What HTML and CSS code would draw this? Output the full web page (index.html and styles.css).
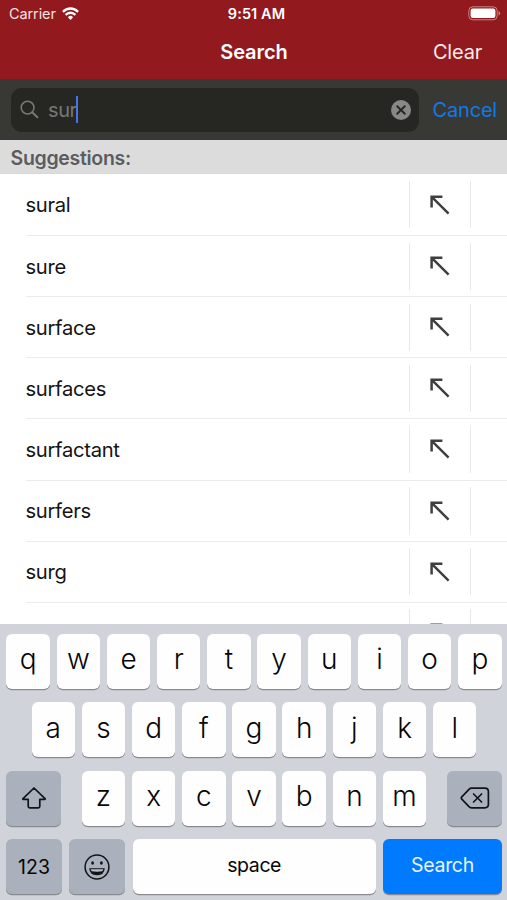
FILE: index.html
```html
<!DOCTYPE html>
<html lang="en">
<head>
<meta charset="utf-8">
<title>Search</title>
<link rel="stylesheet" href="styles.css">
</head>
<body>
<svg class="defs" aria-hidden="true">
  <symbol id="insert" viewBox="0 0 20 20"><path d="M1.6 12.4V1.8H12.4M2 2.2 18.6 18.6" fill="none" stroke="#3f3f3f" stroke-width="2.5"/></symbol>
</svg>
<div class="phone">
  <header class="top">
    <div class="status">
      <div class="carrier"><span>Carrier</span>
        <svg width="17" height="13" viewBox="0 0 17 12" preserveAspectRatio="none" fill="none" stroke="#fff" stroke-width="2.2"><path d="M.9 4.5a10.8 10.8 0 0 1 15.2 0M3.6 7.3a7 7 0 0 1 9.8 0"/><path d="M5.9 9.4a3.7 3.7 0 0 1 5.2 0L8.5 12z" fill="#fff" stroke="none"/></svg>
      </div>
      <div class="time">9:51 AM</div>
      <svg class="battery" width="33" height="15" viewBox="0 0 33 15"><rect x=".8" y=".8" width="28.4" height="13" rx="4" fill="none" stroke="#c98485" stroke-width="1"/><rect x="2.6" y="2.6" width="24.8" height="9.4" rx="2.2" fill="#fff"/><path d="M30.6 5v4.6q1.5-.7 1.5-2.3T30.6 5" fill="#c98485"/></svg>
    </div>
    <nav class="nav"><h1>Search</h1><span class="clear">Clear</span></nav>
  </header>
  <div class="searchbar">
    <div class="field">
      <svg class="lens" width="20" height="20" viewBox="0 0 20 20" fill="none" stroke="#777873"><circle cx="7.6" cy="7.6" r="6.4" stroke-width="1.6"/><path d="m12.4 12.4 5 4.8" stroke-width="2.1" stroke-linecap="round"/></svg>
      <span class="query">sur</span><i class="caret"></i>
      <svg class="wipe" width="20" height="20" viewBox="0 0 20 20"><circle cx="10" cy="10" r="10" fill="#888986"/><path d="m6.2 6.2 7.6 7.6m0-7.6-7.6 7.6" stroke="#292a25" stroke-width="2" stroke-linecap="round"/></svg>
    </div>
    <span class="cancel">Cancel</span>
  </div>
  <h2 class="section">Suggestions:</h2>
  <main class="list">
    <div class="row"><span>sural</span><b><svg><use href="#insert"/></svg></b></div>
    <div class="row"><span>sure</span><b><svg><use href="#insert"/></svg></b></div>
    <div class="row"><span>surface</span><b><svg><use href="#insert"/></svg></b></div>
    <div class="row"><span>surfaces</span><b><svg><use href="#insert"/></svg></b></div>
    <div class="row"><span>surfactant</span><b><svg><use href="#insert"/></svg></b></div>
    <div class="row"><span>surfers</span><b><svg><use href="#insert"/></svg></b></div>
    <div class="row"><span>surg</span><b><svg><use href="#insert"/></svg></b></div>
    <div class="row"><span></span><b><svg><use href="#insert"/></svg></b></div>
  </main>
  <div class="keyboard">
    <div class="keys"><kbd>q</kbd><kbd>w</kbd><kbd>e</kbd><kbd>r</kbd><kbd>t</kbd><kbd>y</kbd><kbd>u</kbd><kbd>i</kbd><kbd>o</kbd><kbd>p</kbd></div>
    <div class="keys"><kbd>a</kbd><kbd>s</kbd><kbd>d</kbd><kbd>f</kbd><kbd>g</kbd><kbd>h</kbd><kbd>j</kbd><kbd>k</kbd><kbd>l</kbd></div>
    <div class="keys spread">
      <kbd class="side"><svg width="26" height="24" viewBox="0 0 26 24"><path d="M13 2 2 12.6q-.5.7.3.7h4.9v7q0 1.5 1.5 1.5h8.6q1.5 0 1.5-1.5v-7h4.9q.8 0 .3-.7z" fill="none" stroke="#111317" stroke-width="1.7" stroke-linejoin="round"/></svg></kbd>
      <div class="keys"><kbd>z</kbd><kbd>x</kbd><kbd>c</kbd><kbd>v</kbd><kbd>b</kbd><kbd>n</kbd><kbd>m</kbd></div>
      <kbd class="side"><svg width="30" height="22" viewBox="0 0 30 22" fill="none" stroke="#111317" stroke-width="1.7" stroke-linejoin="round" stroke-linecap="round"><path d="M11.5 1.2h13.3q3.6 0 3.6 3.5v12.6q0 3.5-3.6 3.5H11.5q-1.4 0-2.5-1.1L1.8 12.2q-1-1.2 0-2.4L9 2.3q1.1-1.1 2.5-1.1z"/><path d="m13.6 7 8 8m0-8-8 8"/></svg></kbd>
    </div>
    <div class="keys bottom">
      <kbd class="mod">123</kbd>
      <kbd class="mod"><svg width="26" height="26" viewBox="0 0 26 26"><circle cx="13" cy="13" r="11.9" fill="none" stroke="#111317" stroke-width="1.5"/><ellipse cx="8.6" cy="9" rx="1.4" ry="1.7" fill="#111317"/><ellipse cx="17.4" cy="9" rx="1.4" ry="1.7" fill="#111317"/><path d="M5.2 14.2h15.6q-.6 7-7.8 7t-7.8-7z" fill="#111317"/><path d="M6.7 15.3h12.6q-.3 1.6-1.2 1.9-5.1.9-10.2 0-.9-.3-1.2-1.9z" fill="#b9c0ca"/></svg></kbd>
      <kbd class="space">space</kbd>
      <kbd class="go">Search</kbd>
    </div>
  </div>
</div>
</body>
</html>
```

FILE: styles.css
```css
* { box-sizing: border-box; margin: 0; padding: 0; }
body { font-family: Inter, "Liberation Sans", sans-serif; font-size: 20px; color: #141414; background: #fff; }
svg { display: block; flex: none; }
.defs { display: none; }
.phone { width: 507px; height: 900px; overflow: hidden; display: flex; flex-direction: column; }
.top { height: 79px; flex: none; background: #92191e; color: #fff; }
.status { height: 27px; padding: 0 6px 0 9px; display: grid; grid-template-columns: 1fr auto 1fr; align-items: center; font-size: 14.5px; }
.carrier { display: flex; align-items: center; gap: 6px; color: #f5e2e2; letter-spacing: -0.1px; }
.time { font-weight: 600; letter-spacing: 0.1px; padding-left: 3px; }
.battery { justify-self: end; }
.nav { height: 50px; padding: 0 25px 0 0; display: grid; grid-template-columns: 1fr auto 1fr; align-items: center; }
.nav h1 { grid-column: 2; font-size: 20px; font-weight: 600; letter-spacing: -0.05px; padding-left: 26px; }
.clear { justify-self: end; font-size: 20px; letter-spacing: -0.2px; color: #fbebeb; }
.searchbar { height: 61px; flex: none; background: #383934; display: flex; align-items: center; padding: 0 10px 0 11px; justify-content: space-between; }
.field { width: 408px; height: 44px; border-radius: 11px; background: #262722; display: flex; align-items: center; padding: 0 9px; }
.lens { margin-right: 8px; }
.query { color: #777873; font-size: 20px; letter-spacing: -0.4px; }
.caret { width: 2.5px; height: 27px; background: #4672ee; margin-left: -1px; }
.wipe { margin-left: auto; margin-right: -1px; }
.cancel { color: #117ae5; font-size: 20px; letter-spacing: -0.2px; }
.section { height: 34px; flex: none; background: #dcdcdc; color: #5c5c5f; font-size: 19.5px; font-weight: 600; letter-spacing: -0.3px; line-height: 36px; padding-left: 10.5px; border-bottom: 1px solid #d8d8d8; }
.list { height: 450px; flex: none; overflow: hidden; padding-top: 0.8px; }
.row { height: 61.15px; margin-left: 25.5px; border-bottom: 1px solid #ebebeb; display: flex; align-items: center; justify-content: space-between; font-size: 20.2px; letter-spacing: -0.3px; }
.row b { width: 62px; height: 47px; margin-right: 36px; border: solid #e9e9e9; border-width: 0 1px; display: flex; align-items: center; justify-content: center; }
.row b svg { width: 20px; height: 20px; margin-right: 1px; }
.keyboard { flex: 1; background: #d0d3d9; padding: 9.5px 5px 0 6px; display: flex; flex-direction: column; gap: 13.5px; }
.keys { display: flex; gap: 6.75px; justify-content: center; }
.spread { justify-content: space-between; }
kbd { width: 43.45px; height: 55px; border-radius: 6px; background: #fefefe; box-shadow: 0 1.3px 0 #898b90; font: 350 28px Inter, sans-serif; color: #060606; display: flex; align-items: center; justify-content: center; padding-bottom: 4px; }
kbd.side { width: 55px; background: #abb1bc; padding: 0; }
kbd.mod { width: 56px; background: #abb1bc; font-size: 19.5px; font-weight: 400; padding: 0; }
.bottom { gap: 0; justify-content: space-between; }
kbd.space { width: 243px; font-size: 19.5px; font-weight: 400; letter-spacing: -0.4px; }
kbd.go { width: 119px; background: #007aff; color: #e9f4ff; font-size: 19.5px; font-weight: 400; letter-spacing: -0.3px; }
```
